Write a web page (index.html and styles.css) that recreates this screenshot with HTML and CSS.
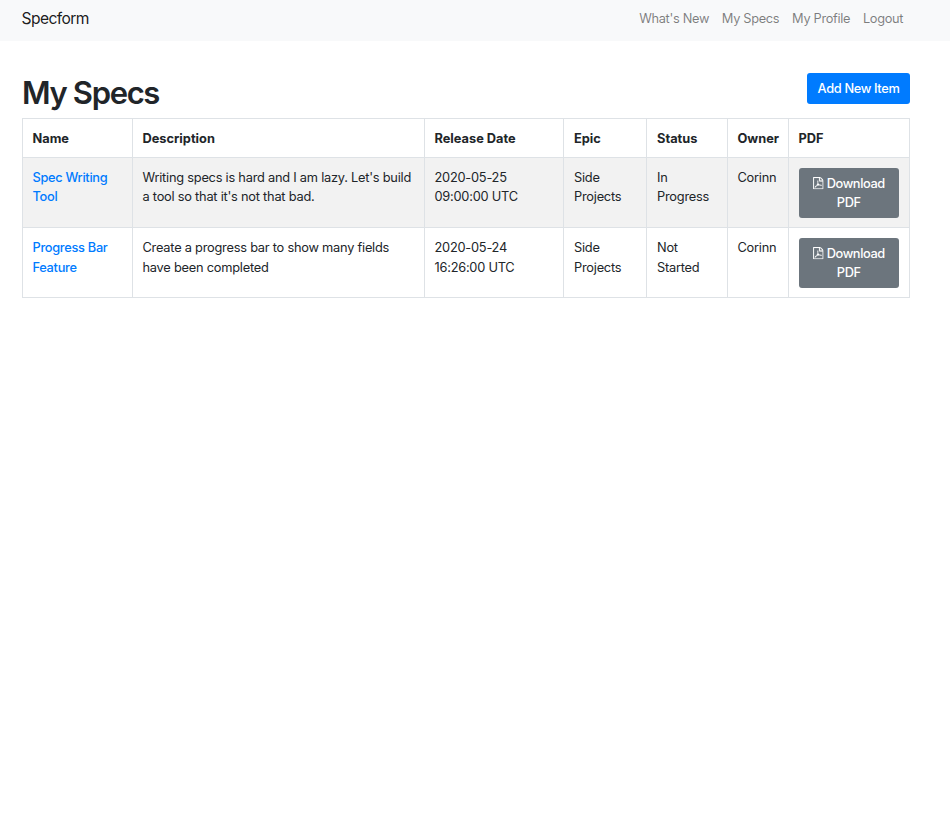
FILE: index.html
```
<!DOCTYPE html>
<html lang="en">
<head>
<meta charset="utf-8">
<title>Specform</title>
<link rel="stylesheet" href="styles.css">
</head>
<body>
<svg width="0" height="0" class="sprite" aria-hidden="true">
  <symbol id="file-pdf" viewBox="0 0 1536 1792">
    <path d="M1468 380q28 28 48 76t20 88v1152q0 40-28 68t-68 28h-1344q-40 0-68-28t-28-68v-1600q0-40 28-68t68-28h896q40 0 88 20t76 48zm-444-244v376h376q-10-29-22-41l-313-313q-12-12-41-22zm384 1528v-1024h-416q-40 0-68-28t-28-68v-416h-768v1536h1280zm-514-593q33 26 84 56 59-7 117-7 147 0 177 49 16 22 2 52 0 1-1 2l-2 2v1q-6 38-71 38-48 0-115-20t-130-53q-221 24-392 83-153 262-242 262-15 0-28-7l-24-12q-1-1-6-5-10-10-6-36 9-40 56-91.500t132-96.500q14-9 23 6 2 2 2 4 52-85 107-197 68-136 104-262-24-82-30.500-159.500t6.500-127.500q11-40 42-40h22q23 0 35 15 18 21 9 68-2 6-4 8 1 3 1 8v30q-2 123-14 192 55 164 146 238z"/>
  </symbol>
</svg>
<nav class="navbar">
  <a class="brand" href="#">Specform</a>
  <div class="links">
    <a href="#">What's New</a>
    <a href="#">My Specs</a>
    <a href="#">My Profile</a>
    <a href="#">Logout</a>
  </div>
</nav>
<main class="content">
  <header class="heading">
    <h1>My Specs</h1>
    <a class="btn btn-primary" href="#">Add New Item</a>
  </header>
  <table class="specs">
    <colgroup>
      <col class="c-name"><col class="c-desc"><col class="c-date"><col class="c-epic"><col class="c-status"><col class="c-owner"><col class="c-pdf">
    </colgroup>
    <thead>
      <tr><th>Name</th><th>Description</th><th>Release Date</th><th>Epic</th><th>Status</th><th>Owner</th><th>PDF</th></tr>
    </thead>
    <tbody>
      <tr>
        <td><a href="#">Spec Writing<br>Tool</a></td>
        <td>Writing specs is hard and I am lazy. Let's build<br>a tool so that it's not that bad.</td>
        <td>2020-05-25<br>09:00:00 UTC</td>
        <td>Side<br>Projects</td>
        <td>In<br>Progress</td>
        <td>Corinn</td>
        <td><a class="btn btn-secondary" href="#"><svg class="icon"><use href="#file-pdf"/></svg>Download<br>PDF</a></td>
      </tr>
      <tr>
        <td><a href="#">Progress Bar<br>Feature</a></td>
        <td>Create a progress bar to show many fields<br>have been completed</td>
        <td>2020-05-24<br>16:26:00 UTC</td>
        <td>Side<br>Projects</td>
        <td>Not<br>Started</td>
        <td>Corinn</td>
        <td><a class="btn btn-secondary" href="#"><svg class="icon"><use href="#file-pdf"/></svg>Download<br>PDF</a></td>
      </tr>
    </tbody>
  </table>
</main>
</body>
</html>
```
FILE: styles.css
```
* { box-sizing: border-box; }
body {
  margin: 0;
  background: #fff;
  color: #212529;
  font: 400 12.8px/19.5px Inter, "Liberation Sans", sans-serif;
  letter-spacing: -.23px;
}
a { color: #007bff; text-decoration: none; }
.sprite { display: block; height: 0; }
.navbar {
  display: flex;
  justify-content: space-between;
  height: 41px;
  padding: 6px 46.8px 0 21.6px;
  background: #f8f9fa;
}
.brand {
  color: rgba(0, 0, 0, .9);
  font-size: 15.6px;
  line-height: 25px;
  letter-spacing: -.6px;
}
.links { display: flex; gap: 12.8px; line-height: 25px; letter-spacing: -.32px; }
.links a { color: rgba(0, 0, 0, .5); }
.content { padding: 32px 40px 0 22px; }
.heading {
  display: flex;
  justify-content: space-between;
  align-items: flex-start;
  height: 45px;
}
h1 {
  margin: 0;
  font-size: 31px;
  line-height: 39px;
  font-weight: 600;
  letter-spacing: -1.35px;
}
.btn {
  display: block;
  border-radius: 3px;
  color: #fff;
  font-weight: 500;
  line-height: 19px;
  letter-spacing: -.4px;
  text-align: center;
}
.btn-primary { width: 103px; height: 31px; line-height: 31px; letter-spacing: -.35px; background: #007bff; }
.btn-secondary { height: 50px; padding-top: 6px; background: #6c757d; }
.icon {
  width: 10.5px;
  height: 12.3px;
  margin-right: 3.5px;
  vertical-align: -1px;
  fill: #fff;
  stroke: #fff;
  stroke-width: 30;
  overflow: visible;
}
.specs {
  width: 888px;
  table-layout: fixed;
  border-collapse: collapse;
}
.c-name { width: 110px; }
.c-desc { width: 292px; }
.c-date { width: 139px; }
.c-epic { width: 83px; }
.c-status { width: 81px; }
.c-owner { width: 61px; }
.c-pdf { width: 121px; }
th, td {
  padding: 10px 10px 0 9.5px;
  border: 1px solid #dee2e6;
  text-align: left;
  vertical-align: top;
  white-space: nowrap;
}
th:nth-child(4), td:nth-child(4),
th:nth-child(5), td:nth-child(5) { padding-left: 10px; }
th { height: 39px; font-weight: 700; letter-spacing: 0; }
td { height: 70px; line-height: 19px; }
td > a { font-weight: 500; }
td > a:not(.btn) { letter-spacing: -.3px; }
tbody tr:first-child { background: #f2f2f2; }
tbody tr:last-child td { line-height: 20px; }
tbody tr:last-child .btn { line-height: 19px; }
```
